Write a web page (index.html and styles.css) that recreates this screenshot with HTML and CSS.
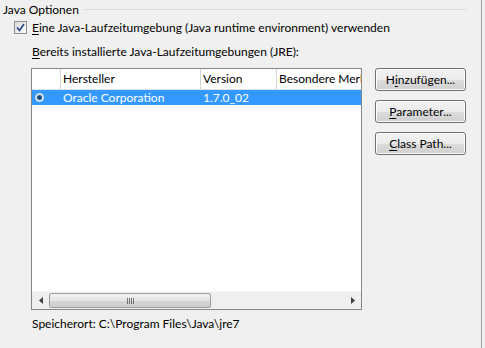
FILE: index.html
```html
<!doctype html>
<html lang="de">
  <head>
    <meta charset="utf-8" />
    <title>Java Optionen</title>
    <link rel="stylesheet" href="styles.css">
  </head>
  <body>
    <div class="panel">
      <div class="group-title">
        <span>Java Optionen</span>
        <div class="group-line"></div>
      </div>

      <label class="check-row">
        <span class="checkbox">
          <svg width="9" height="9" viewBox="0 0 9 9">
            <path d="M1 4.5 L3.5 7.5 L8 1" fill="none" stroke="#1f3e8f" stroke-width="1.6" />
          </svg>
        </span>
        <span><u>E</u>ine Java-Laufzeitumgebung (Java runtime environment) verwenden</span>
      </label>

      <div class="section">
        <div class="section-label"><u>B</u>ereits installierte Java-Laufzeitumgebungen (JRE):</div>

        <div class="main-row">
          <div class="listview">
            <div class="lv-header">
              <div class="col col-radio"></div>
              <div class="col col-vendor">Hersteller</div>
              <div class="col col-version">Version</div>
              <div class="col col-notes">Besondere Merkmale</div>
            </div>
            <div class="lv-row selected">
              <div class="col col-radio"><span class="radio"></span></div>
              <div class="col col-vendor">Oracle Corporation</div>
              <div class="col col-version">1.7.0_02</div>
              <div class="col col-notes"></div>
            </div>
            <div class="lv-body"></div>
            <div class="hscroll">
              <div class="arrow">
                <svg width="4" height="7" viewBox="0 0 4 7"><path d="M4 0 L0 3.5 L4 7 Z" fill="#404040" /></svg>
              </div>
              <div class="track">
                <div class="thumb"><span class="grip"></span></div>
              </div>
              <div class="arrow">
                <svg width="4" height="7" viewBox="0 0 4 7"><path d="M0 0 L4 3.5 L0 7 Z" fill="#404040" /></svg>
              </div>
            </div>
          </div>

          <div class="buttons">
            <button class="btn">H<u>i</u>nzufügen...</button>
            <button class="btn"><u>P</u>arameter...</button>
            <button class="btn"><u>C</u>lass Path...</button>
          </div>
        </div>

        <div class="location">Speicherort: C:\Program Files\Java\jre7</div>
      </div>
    </div>
  </body>
</html>
```

FILE: styles.css
```css
body {
  margin: 0;
  background-color: #f0f0f0;
  font-family: Lato, "Noto Sans", sans-serif;
  font-size: 12px;
  color: #000;
}

u {
  text-decoration-thickness: 1px;
  text-underline-offset: 2px;
}

.panel {
  width: 482px;
  height: 348px;
  border-right: 1px solid #a0a0a0;
  box-sizing: border-box;
  padding-top: 2px;
}

.group-title {
  display: flex;
  align-items: center;
  padding-left: 3px;
  padding-right: 14px;
  height: 15px;
}

.group-line {
  flex: 1;
  margin-left: 5px;
  border-top: 1px solid #d5dfe5;
}

.check-row {
  display: flex;
  align-items: center;
  gap: 5px;
  margin-top: 3px;
  padding-left: 14px;
  height: 15px;
}

.checkbox {
  width: 11px;
  height: 11px;
  border: 1px solid #8e8f8f;
  background: linear-gradient(135deg, #dcdcdc, #fbfbfb);
  display: flex;
  align-items: center;
  justify-content: center;
}

.section {
  padding-left: 31px;
  margin-top: 9px;
}

.section-label {
  height: 15px;
  line-height: 15px;
  padding-left: 1px;
}

.main-row {
  display: flex;
  margin-top: 9px;
}

.listview {
  width: 329px;
  height: 240px;
  border: 1px solid #828790;
  background: #fff;
  display: flex;
  flex-direction: column;
}

.lv-header,
.lv-row {
  display: flex;
}

.lv-header {
  height: 20px;
  border-bottom: 1px solid #e0e0e0;
}

.lv-header .col {
  line-height: 20px;
  border-right: 1px solid #d5d5d5;
  padding-left: 2px;
}

.col {
  box-sizing: border-box;
  white-space: nowrap;
  overflow: hidden;
}

.col-radio { width: 29px; }
.col-vendor { width: 140px; }
.col-version { width: 76px; }
.col-notes { flex: 1; }

.lv-header .col-notes {
  border-right: none;
}

.lv-row {
  height: 15px;
  line-height: 15px;
}

.lv-row .col {
  padding-left: 2px;
}

.lv-row.selected {
  background-color: #3399ff;
  color: #fff;
}

.lv-row .col-radio {
  display: flex;
  align-items: center;
  padding-left: 3px;
}

.radio {
  width: 9px;
  height: 9px;
  border-radius: 50%;
  box-sizing: border-box;
  border: 2px solid #d4e3f2;
  background: radial-gradient(circle, #0d3a66 0, #1e5a96 60%, #5d8cb8 100%);
}

.lv-body {
  flex: 1;
}

.hscroll {
  height: 17px;
  display: flex;
  background: #efefef;
  border-top: 1px solid #f5f5f5;
}

.arrow {
  width: 17px;
  display: flex;
  align-items: center;
  justify-content: center;
}

.track {
  flex: 1;
}

.thumb {
  width: 162px;
  height: 15px;
  margin-top: 1px;
  border: 1px solid #9b9b9b;
  border-radius: 2px;
  box-sizing: border-box;
  background: linear-gradient(#f2f2f2, #e4e4e4 50%, #d4d4d4 51%, #cfcfcf);
  display: flex;
  align-items: center;
  justify-content: center;
}

.grip {
  width: 7px;
  height: 6px;
  background: repeating-linear-gradient(90deg, #707070 0 1px, transparent 1px 2px);
}

.buttons {
  display: flex;
  flex-direction: column;
  gap: 9px;
  margin-left: 13px;
}

.btn {
  width: 91px;
  height: 23px;
  padding: 0;
  font-family: Lato, "Noto Sans", sans-serif;
  font-size: 12px;
  color: #000;
  border: 1px solid #707070;
  border-radius: 3px;
  background: linear-gradient(#f2f2f2, #ebebeb 50%, #dddddd 51%, #cfcfcf);
  box-shadow: inset 0 0 0 1px #fcfcfc;
}

.location {
  margin-top: 6px;
  padding-left: 1px;
  height: 16px;
  line-height: 16px;
}
```
